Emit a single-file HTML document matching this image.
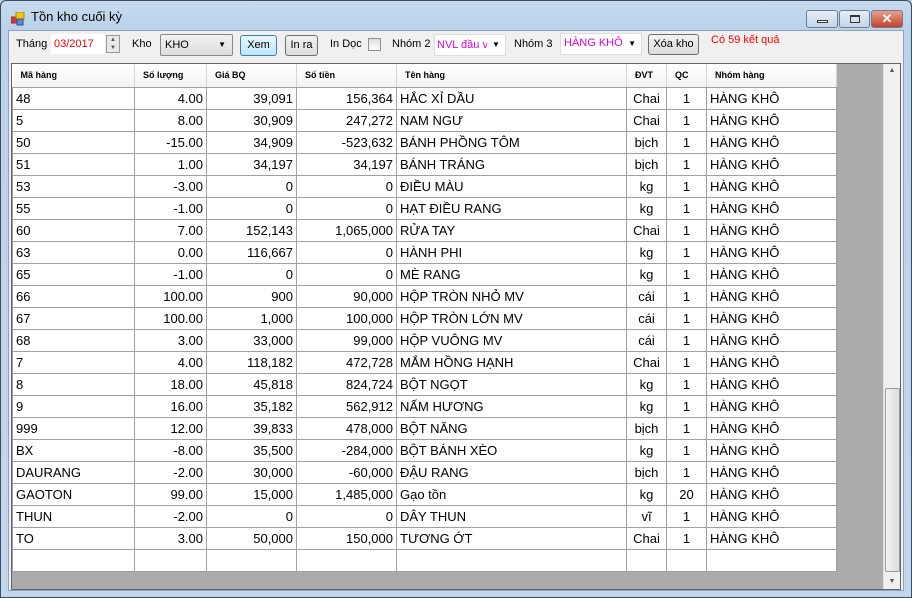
<!DOCTYPE html>
<html><head><meta charset="utf-8"><style>
*{margin:0;padding:0;box-sizing:border-box}
body{width:912px;height:598px;overflow:hidden;font-family:"Liberation Sans",Arial,sans-serif;background:#b9d1ea;position:relative}
.frame{position:absolute;left:0;top:0;width:912px;height:598px;border:1px solid #3b4a5c;border-radius:6px 6px 0 0;background:linear-gradient(#c7daee,#b9d1ea 30px,#c3d7ec)}
.title{position:absolute;left:31px;top:9px;font-size:13px;color:#000}
.client{position:absolute;left:8px;top:30px;width:896px;height:561px;background:#f0f0f0;border:1px solid #8da2bb}
.abs{position:absolute;font-size:11px;color:#000}
.box{position:absolute;background:#fff;border:1px solid #a9b8c9}
.btn{position:absolute;border:1px solid #707070;border-radius:3px;background:linear-gradient(#f2f2f2,#dcdcdc);font-size:11px;text-align:center;line-height:19px}
.grid{position:absolute;left:11px;top:63px;width:890px;height:527px;border:1px solid #646464;background:#ababab;overflow:hidden}
table{border-collapse:collapse;table-layout:fixed;position:absolute;left:0;top:0;background:#fff}
td{height:22px;border:1px solid #a0a0a0;font-size:13px;padding:0 3px;white-space:nowrap;overflow:hidden;color:#000}
th{height:23px;border-right:1px solid #d5d5d5;border-bottom:1px solid #a0a0a0;font-size:9px;font-weight:bold;text-align:left;padding:0 8px;background:linear-gradient(#fff,#f3f3f3)}
td.r{text-align:right}td.c{text-align:center}
.sb{position:absolute;left:871px;top:0;width:17px;height:525px;background:#f0f0f0;border-left:1px solid #e0e0e0}
.thumb{position:absolute;left:1px;top:324px;width:15px;height:184px;border:1px solid #999;border-radius:2px;background:linear-gradient(90deg,#f4f4f4,#dcdcdc)}
.wb{position:absolute;top:10px;height:18px;border:1px solid #6b7d93;border-radius:3px}
</style></head><body>
<div class="frame"></div>
<svg style="position:absolute;left:11px;top:12px" width="14" height="14"><rect x="0" y="5" width="6" height="6" fill="#d33" stroke="#833"/><rect x="5" y="0" width="8" height="7" fill="#f5c518" stroke="#a80"/><rect x="6" y="7" width="6" height="6" fill="#5a8be0" stroke="#357"/></svg>
<div class="title">Tồn kho cuối kỳ</div>
<div class="wb" style="left:806px;width:32px;background:linear-gradient(#e6eef8,#c5d5e8)"><div style="position:absolute;left:10px;top:9px;width:11px;height:3px;border:1px solid #333;background:#fff"></div></div>
<div class="wb" style="left:839px;width:31px;background:linear-gradient(#e6eef8,#c5d5e8)"><div style="position:absolute;left:10px;top:4px;width:10px;height:8px;border:1px solid #333;border-top-width:2px"></div></div>
<div class="wb" style="left:871px;width:32px;background:linear-gradient(#e8a08c,#c4432c);color:#fff;text-align:center;font-weight:bold;font-size:13px;line-height:16px">✕</div>
<div class="client"></div>
<div class="abs" style="left:16px;top:38px">Tháng</div>
<div class="box" style="left:51px;top:34px;width:54px;height:20px;border-color:#fff"><span style="position:absolute;left:2px;top:3px;font-size:11px;color:#e00">03/2017</span></div>
<div class="box" style="left:106px;top:35px;width:14px;height:18px;background:#e8e8e8;border-color:#999;font-size:6px;text-align:center;line-height:8px;color:#456">▲<br>▼</div>
<div class="abs" style="left:132px;top:38px">Kho</div>
<div class="box" style="left:160px;top:34px;width:73px;height:22px;border-color:#888;border-radius:2px;background:linear-gradient(#f2f2f2,#dedede)"><span style="position:absolute;left:4px;top:4px;font-size:11px">KHO</span><span style="position:absolute;right:6px;top:5px;font-size:8px">▼</span></div>
<div class="btn" style="left:240px;top:35px;width:37px;height:21px;border-color:#3c7fb1;background:linear-gradient(#eaf6fd,#bee6fd)">Xem</div>
<div class="btn" style="left:285px;top:35px;width:33px;height:21px">In ra</div>
<div class="abs" style="left:330px;top:38px">In Dọc</div>
<div class="box" style="left:368px;top:38px;width:13px;height:13px;border-color:#8e8f8f;background:linear-gradient(#ddd,#fff)"></div>
<div class="abs" style="left:392px;top:38px">Nhóm 2</div>
<div class="box" style="left:434px;top:34px;width:72px;height:22px;border-color:#ddd;overflow:hidden"><span style="position:absolute;left:2px;top:4px;font-size:11px;color:#d0d;white-space:nowrap">NVL đầu v</span><span style="position:absolute;right:0;top:0;width:18px;height:20px;background:#fff;font-size:8px;text-align:center;line-height:20px">▼</span></div>
<div class="abs" style="left:514px;top:38px">Nhóm 3</div>
<div class="box" style="left:560px;top:33px;width:82px;height:22px;border-color:#ddd"><span style="position:absolute;left:3px;top:3px;font-size:11px;color:#d0d">HÀNG KHÔ</span><span style="position:absolute;right:5px;top:5px;font-size:8px">▼</span></div>
<div class="btn" style="left:648px;top:34px;width:51px;height:21px">Xóa kho</div>
<div class="abs" style="left:711px;top:34px;color:#f00">Có 59 kết quả</div>
<div class="grid">
<table style="width:824px">
<colgroup><col style="width:122px"><col style="width:72px"><col style="width:90px"><col style="width:100px"><col style="width:230px"><col style="width:40px"><col style="width:40px"><col style="width:130px"></colgroup>
<tr><th>Mã hàng</th><th>Số lượng</th><th>Giá BQ</th><th>Số tiền</th><th>Tên hàng</th><th>ĐVT</th><th>QC</th><th>Nhóm hàng</th></tr>
<tr><td>48</td><td class="r">4.00</td><td class="r">39,091</td><td class="r">156,364</td><td>HẮC XỈ DẦU</td><td class="c">Chai</td><td class="c">1</td><td>HÀNG KHÔ</td></tr>
<tr><td>5</td><td class="r">8.00</td><td class="r">30,909</td><td class="r">247,272</td><td>NAM NGƯ</td><td class="c">Chai</td><td class="c">1</td><td>HÀNG KHÔ</td></tr>
<tr><td>50</td><td class="r">-15.00</td><td class="r">34,909</td><td class="r">-523,632</td><td>BÁNH PHỒNG TÔM</td><td class="c">bịch</td><td class="c">1</td><td>HÀNG KHÔ</td></tr>
<tr><td>51</td><td class="r">1.00</td><td class="r">34,197</td><td class="r">34,197</td><td>BÁNH TRÁNG</td><td class="c">bịch</td><td class="c">1</td><td>HÀNG KHÔ</td></tr>
<tr><td>53</td><td class="r">-3.00</td><td class="r">0</td><td class="r">0</td><td>ĐIỀU MÀU</td><td class="c">kg</td><td class="c">1</td><td>HÀNG KHÔ</td></tr>
<tr><td>55</td><td class="r">-1.00</td><td class="r">0</td><td class="r">0</td><td>HẠT ĐIỀU RANG</td><td class="c">kg</td><td class="c">1</td><td>HÀNG KHÔ</td></tr>
<tr><td>60</td><td class="r">7.00</td><td class="r">152,143</td><td class="r">1,065,000</td><td>RỬA TAY</td><td class="c">Chai</td><td class="c">1</td><td>HÀNG KHÔ</td></tr>
<tr><td>63</td><td class="r">0.00</td><td class="r">116,667</td><td class="r">0</td><td>HÀNH PHI</td><td class="c">kg</td><td class="c">1</td><td>HÀNG KHÔ</td></tr>
<tr><td>65</td><td class="r">-1.00</td><td class="r">0</td><td class="r">0</td><td>MÈ RANG</td><td class="c">kg</td><td class="c">1</td><td>HÀNG KHÔ</td></tr>
<tr><td>66</td><td class="r">100.00</td><td class="r">900</td><td class="r">90,000</td><td>HỘP TRÒN NHỎ MV</td><td class="c">cái</td><td class="c">1</td><td>HÀNG KHÔ</td></tr>
<tr><td>67</td><td class="r">100.00</td><td class="r">1,000</td><td class="r">100,000</td><td>HỘP TRÒN LỚN MV</td><td class="c">cái</td><td class="c">1</td><td>HÀNG KHÔ</td></tr>
<tr><td>68</td><td class="r">3.00</td><td class="r">33,000</td><td class="r">99,000</td><td>HỘP VUÔNG MV</td><td class="c">cái</td><td class="c">1</td><td>HÀNG KHÔ</td></tr>
<tr><td>7</td><td class="r">4.00</td><td class="r">118,182</td><td class="r">472,728</td><td>MẮM HỒNG HẠNH</td><td class="c">Chai</td><td class="c">1</td><td>HÀNG KHÔ</td></tr>
<tr><td>8</td><td class="r">18.00</td><td class="r">45,818</td><td class="r">824,724</td><td>BỘT NGỌT</td><td class="c">kg</td><td class="c">1</td><td>HÀNG KHÔ</td></tr>
<tr><td>9</td><td class="r">16.00</td><td class="r">35,182</td><td class="r">562,912</td><td>NẤM HƯƠNG</td><td class="c">kg</td><td class="c">1</td><td>HÀNG KHÔ</td></tr>
<tr><td>999</td><td class="r">12.00</td><td class="r">39,833</td><td class="r">478,000</td><td>BỘT NĂNG</td><td class="c">bịch</td><td class="c">1</td><td>HÀNG KHÔ</td></tr>
<tr><td>BX</td><td class="r">-8.00</td><td class="r">35,500</td><td class="r">-284,000</td><td>BỘT BÁNH XÈO</td><td class="c">kg</td><td class="c">1</td><td>HÀNG KHÔ</td></tr>
<tr><td>DAURANG</td><td class="r">-2.00</td><td class="r">30,000</td><td class="r">-60,000</td><td>ĐẬU RANG</td><td class="c">bịch</td><td class="c">1</td><td>HÀNG KHÔ</td></tr>
<tr><td>GAOTON</td><td class="r">99.00</td><td class="r">15,000</td><td class="r">1,485,000</td><td>Gạo tồn</td><td class="c">kg</td><td class="c">20</td><td>HÀNG KHÔ</td></tr>
<tr><td>THUN</td><td class="r">-2.00</td><td class="r">0</td><td class="r">0</td><td>DÂY THUN</td><td class="c">vĩ</td><td class="c">1</td><td>HÀNG KHÔ</td></tr>
<tr><td>TO</td><td class="r">3.00</td><td class="r">50,000</td><td class="r">150,000</td><td>TƯƠNG ỚT</td><td class="c">Chai</td><td class="c">1</td><td>HÀNG KHÔ</td></tr>
<tr><td></td><td></td><td></td><td></td><td></td><td></td><td></td><td></td></tr>
</table>
<div class="sb"><div style="position:absolute;top:3px;width:16px;text-align:center;font-size:7px;color:#555">▲</div><div class="thumb"></div><div style="position:absolute;bottom:4px;width:16px;text-align:center;font-size:7px;color:#555">▼</div></div>
</div>
</body></html>
